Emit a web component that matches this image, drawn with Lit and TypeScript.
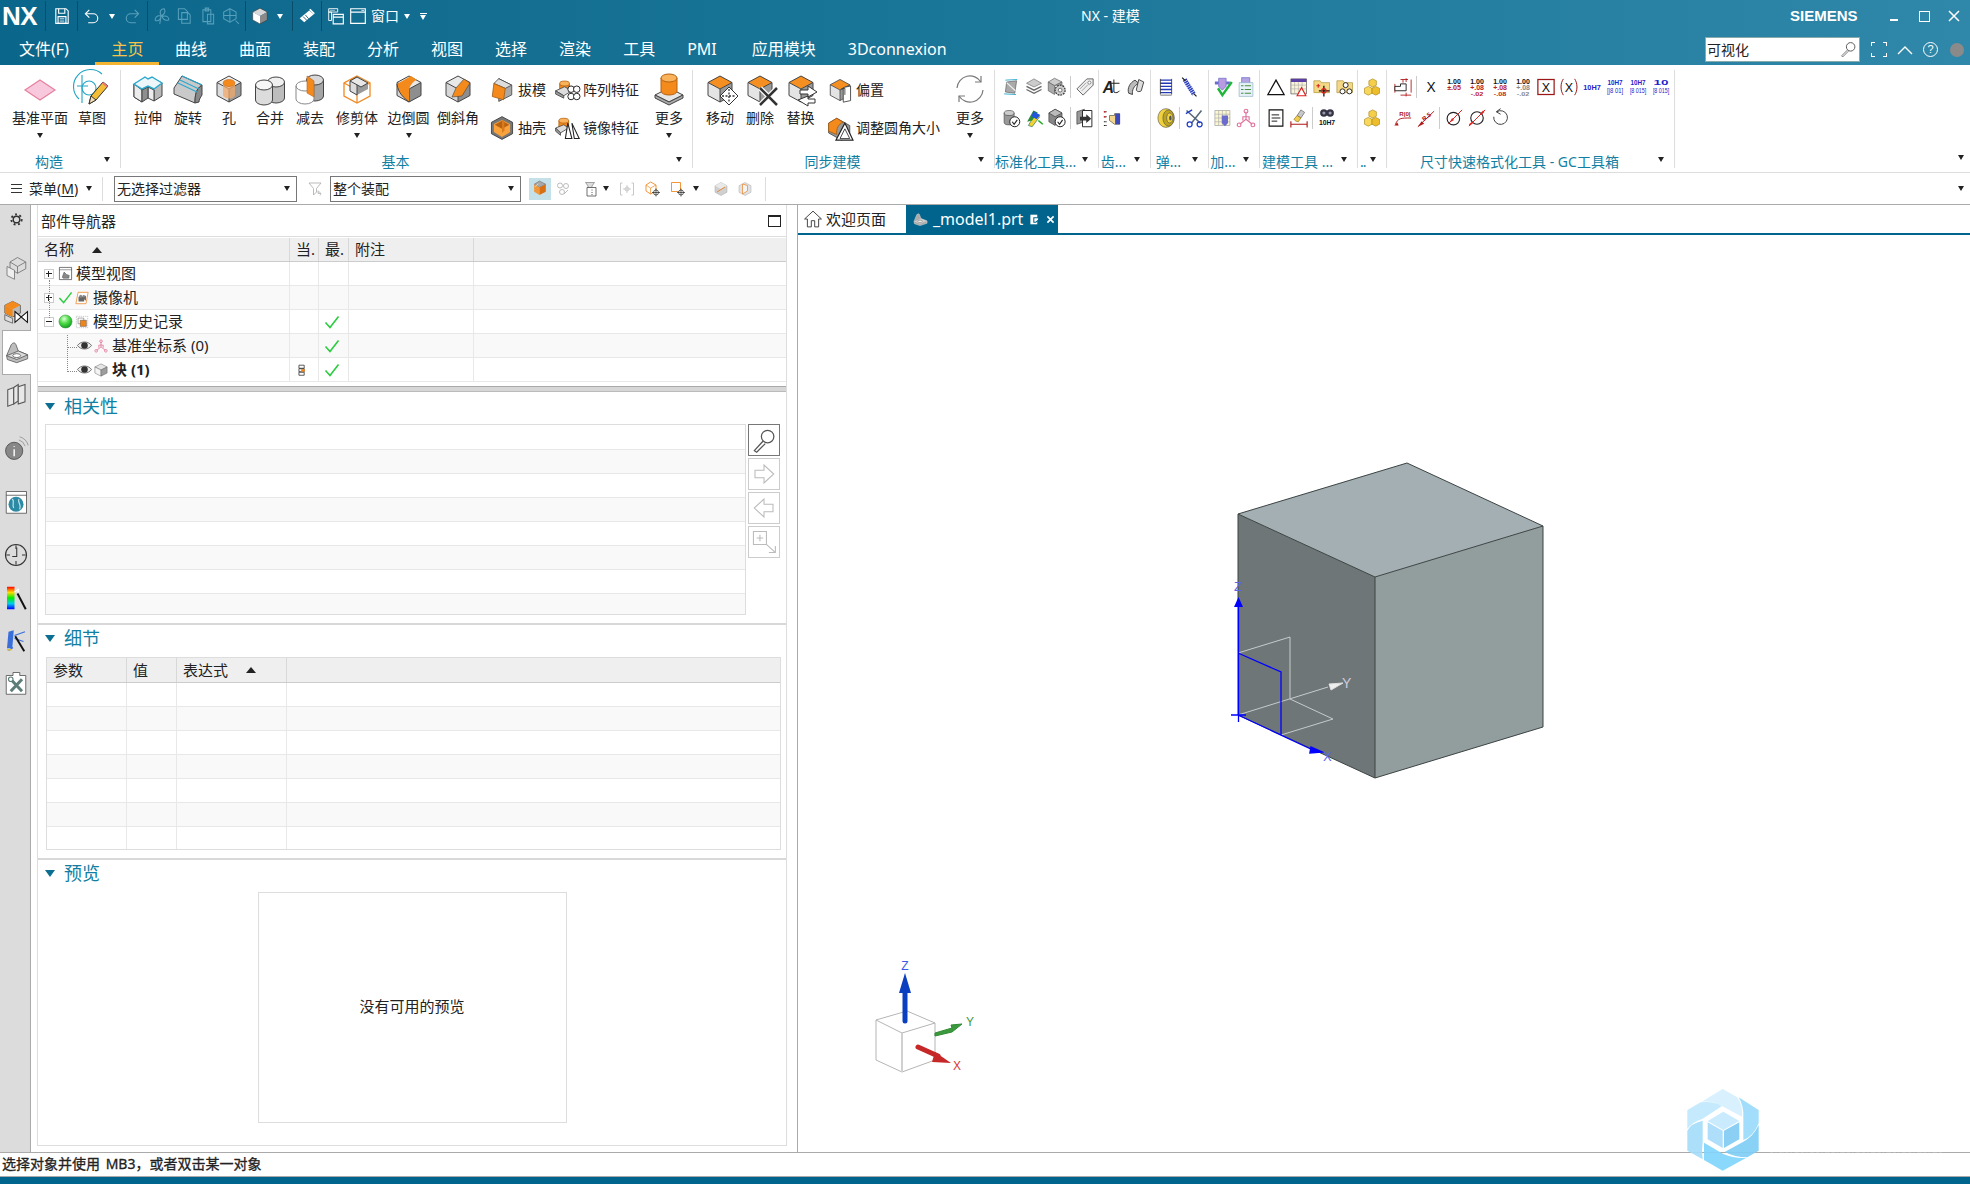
import { LitElement, html, css, svg, nothing } from 'lit';
import type { TemplateResult } from 'lit';
import { customElement } from 'lit/decorators.js';

// shaded cube in a 32 box, most of the ribbon icons start from this
const cube = (top = '#e8e8e8', left = '#d6d6d6', right = '#8e8e8e') => svg`
  <path d="M16 3 28 9.5 16 16 4 9.5Z" fill=${top}/>
  <path d="M4 9.5 16 16V29L4 22.5Z" fill=${left}/>
  <path d="M16 16 28 9.5V22.5L16 29Z" fill=${right}/>
  <path d="M16 3 28 9.5V22.5L16 29 4 22.5V9.5ZM4 9.5 16 16 28 9.5M16 16V29" fill="none" stroke="#444" stroke-width="1" stroke-linejoin="round"/>`;
const orangeCube = cube('#f58f22', '#e4e4e4', '#9a9a9a');

const cyl = (x: number, y: number, rx: number, ry: number, h: number, body: string, top: string, line = '#444') => svg`
  <path d="M${x - rx} ${y}v${h}a${rx} ${ry} 0 0 0 ${rx * 2} 0v${-h}" fill=${body} stroke=${line}/>
  <ellipse cx=${x} cy=${y} rx=${rx} ry=${ry} fill=${top} stroke=${line}/>`;

const plate = svg`<path d="M16 15 30 22 16 29 2 22Z" fill="#e6e6e6" stroke="#444"/><path d="M2 22v3l14 7 14-7v-3L16 29Z" fill="#aaa" stroke="#444"/>`;
const dimText = (a: string, b: string, c: string, ca = '#111', cb = '#b22') => svg`
  <text x="16" y="11" text-anchor="middle" font-size="12" font-weight="700" fill=${ca} textLength="22" lengthAdjust="spacingAndGlyphs">${a}</text>
  <text x="16" y="21" text-anchor="middle" font-size="11" font-weight="700" fill=${cb} textLength="22" lengthAdjust="spacingAndGlyphs">${b}</text>
  ${c ? svg`<text x="16" y="30" text-anchor="middle" font-size="10" font-weight="700" fill=${cb} textLength="20" lengthAdjust="spacingAndGlyphs">${c}</text>` : nothing}`;
const fitText = (a: string, b: string) => svg`
  <text x="16" y="13" text-anchor="middle" font-size="13" font-weight="700" fill="#2222cc" textLength="24" lengthAdjust="spacingAndGlyphs">${a}</text>
  <text x="16" y="26" text-anchor="middle" font-size="11" fill="#2222cc" textLength="26" lengthAdjust="spacingAndGlyphs">${b}</text>`;
const goldCubes = svg`
  <path d="M11 6 17 3 23 6V13L17 16 11 13Z" fill="#f5cf4a" stroke="#a88316"/>
  <path d="M4 18 10 15 16 18V26L10 29 4 26Z" fill="#f7d85c" stroke="#a88316"/>
  <path d="M16 18 22 15 28 18V26L22 29 16 26Z" fill="#eebd2b" stroke="#a88316"/>`;

const I: Record<string, TemplateResult> = {
  datum: svg`<path d="M16 7 31 17 16 27 1 17Z" fill="#f8c8dc" stroke="#e5809f" stroke-width="1.2"/>`,
  sketch: svg`<g fill="none" stroke="#22a3c4" stroke-width="1.1"><path d="M1 13H12M6 2V30"/><path d="M3 26A13 13 0 0 1 26 1"/><circle cx="13" cy="15" r="7"/></g>
    <path d="M13 31 15 23 27 9 32 13 20 27Z" fill="#f3bd35" stroke="#333"/><path d="M13 31 15 23 20 27Z" fill="#f4dfb5" stroke="#333"/><path d="M26 10.5 31 14.5 32 13 27 9Z" fill="#e77"/>`,
  extrude: svg`<path d="M2 11 13 5 17 7 21 5 30 10V23L22 28V17L16 14 10 17V29L2 24Z" fill="#b9b9b9" stroke="#444"/><path d="M2 11 10 17V29L2 24ZM16 14 22 17V28L16 25Z" fill="#ececec" stroke="#444"/><path d="M10 17 16 14V25L10 29Z" fill="#8f8f8f" stroke="#444"/><path d="M2 11 13 4 16 6 20 4 30 10 22 16 16 13 10 16Z" fill="#eef6fa" stroke="#2aa9cf" stroke-width="1.4"/>`,
  revolve: svg`<path d="M2 15 10 3 30 12C24 16 23 22 23 30L2 21Z" fill="#c9c9c9" stroke="#444"/><path d="M23 30C23 22 24 16 30 12V22C28 25 27 27 27 29Z" fill="#888" stroke="#444"/><path d="M10 3 30 12M8 7 27 16M6 10 25 19" stroke="#2aa9cf" stroke-width="1.2" fill="none"/>`,
  hole: svg`${cube('#ededed', '#dcdcdc', '#9a9a9a')}<path d="M10 10v12a6 3.5 0 0 0 12 0V10" fill="#f2a868" opacity=".75"/><ellipse cx="16" cy="10" rx="6" ry="3.5" fill="#f58a1c" stroke="#c96a10" stroke-width=".6"/>`,
  unite: svg`${cyl(22, 9, 8.5, 5, 16, '#bdbdbd', '#f0f0f0')}${cyl(10, 12, 8.5, 5, 15, '#dcdcdc', '#f6f6f6')}`,
  subtract: svg`${cyl(21, 7, 8.5, 5, 16, '#a5a5a5', '#d8d8d8')}<ellipse cx="11" cy="13" rx="9" ry="5" fill="#fff"/><path d="M2 13v13a9 5 0 0 0 18 0V13" fill="#fff" stroke="#888"/><ellipse cx="11" cy="13" rx="9" ry="5" fill="none" stroke="#888"/><path d="M13 3 20 8V24L13 20Z" fill="#f58a1c" stroke="#b96010" stroke-width=".6"/>`,
  trim: svg`<path d="M16 3 29 10V23L16 30 3 23V10Z" fill="none" stroke="#f08a24" stroke-width="1.3"/><path d="M3 10 16 17 29 10M16 17V30" fill="none" stroke="#f08a24" stroke-width="1.3"/><path d="M16 4 27 10 27 16 16 22Z" fill="#9a9a9a"/><path d="M9 8 16 4 16 22 9 18Z" fill="#dcdcdc" stroke="#444"/><path d="M9 8 16 4 27 10 20 14Z" fill="#e8e8e8" stroke="#444"/>`,
  blend: svg`${cube()}<path d="M4 11 18 3 24 7C20 8 16 13 16 19V29C11 25 5 20 4 11Z" fill="#f58a1c"/><path d="M4 11C5 20 11 25 16 29" fill="none" stroke="#444"/>`,
  chamfer: svg`${cube()}<path d="M14 15 22 6 28 10 20 23 10 24Z" fill="#f58a1c" stroke="#444" stroke-width=".6"/>`,
  draft: svg`<path d="M12 2 28 10V22L12 30Z" fill="#a9a9a9" stroke="#444"/><path d="M12 2 28 10 20 14 6 8Z" fill="#ddd" stroke="#444"/><path d="M6 8 20 14 18 28 4 24Z" fill="#f58a1c" stroke="#a55d12"/>`,
  shell: svg`<path d="M16 2 29 9V23L16 30 3 23V9Z" fill="#777" stroke="#333"/><path d="M16 6 26 11V21L16 27 6 21V11Z" fill="#f9a13a"/><path d="M16 7 25 12 16 17 7 12Z" fill="#b86110"/><path d="M16 6 19 8 19 19 16 22Z" fill="#d97a1c"/>`,
  pattern: svg`${cyl(13, 8, 6, 3, 8, '#f58a1c', '#fab25b', '#b56210')}<path d="M2 17 13 12 22 17 12 23Z" fill="#ddd" stroke="#444"/><path d="M2 17v4l10 5V23Z" fill="#999" stroke="#444"/><g fill="#fff" stroke="#222" stroke-width="1.2"><circle cx="21" cy="15" r="4"/><circle cx="28" cy="15" r="4"/><circle cx="21" cy="24" r="4"/><circle cx="28" cy="24" r="4"/></g>`,
  mirror: svg`${cyl(12, 7, 6, 3, 8, '#f58a1c', '#fab25b', '#b56210')}<path d="M2 16 12 12 18 16 8 22Z" fill="#ddd" stroke="#444"/><path d="M2 16v4l6 5V22Z" fill="#999" stroke="#444"/><path d="M17 10 14 29H22ZM22 10 25 29H31Z" fill="#fff" stroke="#222" stroke-width="1.3"/>`,
  more1: svg`${plate}${cyl(16, 5, 8, 4, 13, '#f58a1c', '#fab25b', '#b56210')}`,
  move: svg`${orangeCube}<path d="M25 14 34 23 25 32 16 23Z" fill="#fff" stroke="#333"/><path d="M25 16v14M18 23h14" stroke="#333" stroke-dasharray="2 1.5" stroke-width="1.3"/>`,
  del: svg`${orangeCube}<path d="M16 15 33 32M33 15 16 32" stroke="#fff" stroke-width="5"/><path d="M16 15 33 32M33 15 16 32" stroke="#333" stroke-width="2.5"/>`,
  swap: svg`${orangeCube}<path d="M23 13 32 19 23 24V21H15V17H23ZM23 23 13 27 23 33V30H30V26H23Z" fill="#fff" stroke="#333"/>`,
  offset: svg`${orangeCube}<path d="M20 13 29 11V29L20 31Z" fill="#fff" stroke="#333"/><path d="M17 15 22 14V22" fill="none" stroke="#333"/>`,
  resize: svg`<path d="M2 10 12 4 28 13V25L18 31 2 22Z" fill="#9a9a9a" stroke="#444"/><path d="M2 10 12 4 20 9C14 11 11 17 12 24L2 20Z" fill="#f58a1c" stroke="#a55d12"/><path d="M22 10 11 31H32Z" fill="#fff" stroke="#222" stroke-width="1.4"/><path d="M22 17 16 29H28Z" fill="#fff" stroke="#222"/>`,
  sync: svg`<g fill="none" stroke="#7a7a7a" stroke-width="1.2"><path d="M3 15A13 13 0 0 1 27 9M29 17A13 13 0 0 1 5 23"/><path d="M27 3V9H21M5 29V23H11"/></g>`,

  sheet: svg`<path d="M9 8 25 6 22 26 7 24Z" fill="#aaa" stroke="#555"/><path d="M7 5 26 4M5 27 24 28" stroke="#23a5c9" stroke-width="1.4" fill="none"/><path d="M9 9 23 22" stroke="#eee" stroke-width="2"/>`,
  layers: svg`<path d="M16 3 28 10 16 16 4 10Z" fill="#ccc" stroke="#666"/><path d="M4 15 16 21 28 15M4 20 16 26 28 20" fill="none" stroke="#666" stroke-width="2.2"/>`,
  gearCube: svg`<path d="M12 2 24 8 12 14 2 8Z" fill="#ccc" stroke="#555"/><path d="M2 8V22L12 28V14ZM12 14 24 8V14" fill="#aaa" stroke="#555"/><circle cx="21" cy="21" r="8" fill="#ccc" stroke="#333" stroke-width="2" stroke-dasharray="3 1.5"/><circle cx="21" cy="21" r="3" fill="#fff" stroke="#333"/>`,
  tag: svg`<path d="M29 3 19 3 3 19 13 29 29 13Z" fill="#eee" stroke="#555" stroke-width="1.4"/><circle cx="23" cy="9" r="2.5" fill="#fff" stroke="#555"/><path d="M8 19 18 9M11 22 21 12" stroke="#999" stroke-width="1.4"/>`,
  checkGray: svg`${cyl(13, 8, 8, 4, 15, '#999', '#ccc')}<circle cx="22" cy="22" r="8" fill="#fff" stroke="#222" stroke-width="1.6"/><path d="M18 22l3 4 5-7" stroke="#222" stroke-width="1.8" fill="none"/>`,
  tool: svg`<path d="M7 28 18 9 25 14 13 30Z" fill="#f3d233" stroke="#166"/><path d="M5 22 15 4 22 7 13 20Z" fill="#2d8a3a"/><path d="M15 5 26 11 20 18 12 13Z" fill="#2255dd"/><path d="M23 20 30 26" stroke="#2a2" stroke-width="2.5"/>`,
  cubeCheck: svg`<path d="M13 2 24 8V16L13 28 3 22V8Z" fill="#888" stroke="#333"/><path d="M13 2 24 8 13 14 3 8Z" fill="#bbb" stroke="#333"/><circle cx="21" cy="22" r="8" fill="#fff" stroke="#222" stroke-width="1.6"/><path d="M17 22l3 4 5-7" stroke="#222" stroke-width="1.8" fill="none"/>`,
  docArrow: svg`<path d="M3 6 15 2 15 22 3 26Z" fill="#999" stroke="#333"/><path d="M12 4H27V30H12Z" fill="#fff" stroke="#222" stroke-width="1.5"/><path d="M8 14H18V10L26 17 18 24V20H8Z" fill="#333"/>`,
  at: svg`<text x="1" y="25" font-size="25" font-style="italic" font-weight="700" fill="#222">A</text><path d="M19 4V24M14 10H28M19 24C22 26 26 25 28 22" stroke="#222" stroke-width="1.6" fill="none"/>`,
  pipe: svg`<path d="M6 26C3 18 8 9 16 5L22 10C14 14 11 21 12 28Z" fill="#bbb" stroke="#333" stroke-width="1.4"/><path d="M22 4 30 8 26 22C24 24 20 24 18 21Z" fill="#ddd" stroke="#333" stroke-width="1.4"/>`,
  hand: svg`<path d="M3 6H8M3 14H8M3 22H8M3 28H8" stroke="#222" stroke-width="1.6" stroke-dasharray="3 1"/><path d="M3 6H6M3 14H6" stroke="#d22" stroke-width="2"/><path d="M12 12H20V9H28V26H20L12 20Z" fill="#f3d68a" stroke="#444"/><path d="M21 9H29V26H21Z" fill="#3d49b8"/>`,
  coil: svg`<path d="M8 3H25V29H8Z" fill="#fff"/><g stroke="#2238b5" stroke-width="2.2"><path d="M7 5H25M7 10H25M7 15H25M7 20H25M7 25H25"/></g><path d="M7 3V28M25 3V28" stroke="#222" stroke-width="1.2"/><path d="M7 29H25" stroke="#222"/>`,
  spring: svg`<path d="M9 4 24 28" stroke="#2b3fc0" stroke-width="7" stroke-dasharray="2.5 1"/><path d="M5 1 10 6M24 27 28 31" stroke="#222" stroke-width="2"/>`,
  bearing: svg`<ellipse cx="16" cy="16" rx="13" ry="15" fill="#f1d13c" stroke="#555"/><ellipse cx="20" cy="16" rx="9" ry="13" fill="#bda21e" stroke="#555"/><ellipse cx="22" cy="16" rx="5" ry="8" fill="#eed23e" stroke="#555"/><ellipse cx="23" cy="16" rx="2" ry="4" fill="#555"/>`,
  scissors: svg`<path d="M4 4 26 24M28 4 12 24" stroke="#567" stroke-width="2.4"/><circle cx="9" cy="26" r="4" fill="none" stroke="#1d3dc7" stroke-width="2"/><circle cx="25" cy="26" r="4" fill="none" stroke="#1d3dc7" stroke-width="2"/><path d="M3 9 13 3" stroke="#1d3dc7" stroke-width="2"/>`,
  blueCheck: svg`<path d="M9 2H21V15L15 21 9 15Z" fill="#b99be2" stroke="#5a62c4"/><path d="M3 7H9V12H3ZM21 7H27V12H21Z" fill="#6c6cd0"/><path d="M8 18 15 29 30 8" fill="none" stroke="#21b63a" stroke-width="4"/>`,
  blueList: svg`<path d="M9 1H22V14H9Z" fill="#b2a3e2" stroke="#5a62c4"/><path d="M5 9H27V31H5Z" fill="#e7f2fb" stroke="#8ab"/><path d="M8 14H12M14 14H24M8 20H12M14 20H24M8 26H12M14 26H24" stroke="#4a8d3a" stroke-width="1.8"/>`,
  gridBlue: svg`<path d="M3 4H27V28H3Z" fill="#fbf7d0" stroke="#999"/><path d="M3 10H27M3 16H27M3 22H27M9 4V28M15 4V28M21 4V28" stroke="#aaa"/><path d="M14 12H24V24L19 29 14 24Z" fill="#6c6cd0"/>`,
  csys: svg`<g fill="none" stroke="#e0709a" stroke-width="1.8"><path d="M16 6V18L6 26M16 18 26 26"/><circle cx="16" cy="5" r="3"/><circle cx="5" cy="27" r="3"/><circle cx="27" cy="27" r="3"/><path d="M11 20V14H21V20"/></g>`,
  triangle: svg`<path d="M16 5 29 28H3Z" fill="#fff" stroke="#111" stroke-width="2"/>`,
  tableRed: svg`<path d="M3 3H28V27H3Z" fill="#fbf3d8" stroke="#444"/><path d="M3 3H28V8H3Z" fill="#5b3fa5"/><path d="M3 13H28M3 19H28M9 8V27M15 8V27M21 8V27" stroke="#aaa"/><path d="M20 17 27 30H13Z" fill="#fff" stroke="#d22" stroke-width="1.8"/>`,
  folderCross: svg`<path d="M3 6H13L15 9H28V25H3Z" fill="#f5d886" stroke="#a98b2e"/><path d="M19 14V31M11 22H28" stroke="#111" stroke-width="2"/><circle cx="19" cy="22" r="3.5" fill="none" stroke="#d22" stroke-width="2"/><path d="M7 14H13M10 11V17" stroke="#d22" stroke-width="1.8"/>`,
  folderCircles: svg`<path d="M3 6H13L15 9H28V25H3Z" fill="#f5d886" stroke="#a98b2e"/><g fill="#fff" stroke="#222" stroke-width="1.5"><circle cx="17" cy="13" r="4"/><circle cx="12" cy="23" r="4"/><circle cx="23" cy="23" r="4"/></g>`,
  docLines: svg`<path d="M5 3H27V29H5Z" fill="#fff" stroke="#111" stroke-width="1.8"/><path d="M9 11H21M9 16H23M9 21H18" stroke="#111" stroke-width="1.5"/>`,
  brushDim: svg`<path d="M19 3 25 7 19 16 13 12Z" fill="#c8c8c8" stroke="#555"/><path d="M13 12 19 16 15 22C12 22 9 20 8 18Z" fill="#f2cc52" stroke="#8a6a10"/><path d="M3 21V31M29 21V31M3 26H29" stroke="#b01818" stroke-width="1.8"/>`,
  bino: svg`<circle cx="11" cy="8" r="6" fill="#334"/><circle cx="21" cy="8" r="6" fill="#334"/><circle cx="11" cy="8" r="2.5" fill="#99a"/><circle cx="21" cy="8" r="2.5" fill="#99a"/><text x="16" y="27" text-anchor="middle" font-size="12" font-weight="700" fill="#111" textLength="26" lengthAdjust="spacingAndGlyphs">10H7</text>`,
  gold: goldCubes,
  dimRed: svg`<path d="M3 11V25M29 4V25M16 4V9M3 18H16M21 2V8M12 4H24M12 29H29M21 25V31" stroke="#b01818" stroke-width="1.4" fill="none"/><path d="M12 11H21V22H3V15H12Z" fill="#fff" stroke="#222" stroke-width="1.5"/>`,
  xMark: svg`<text x="16" y="24" text-anchor="middle" font-size="22" fill="#111">X</text>`,
  d1: dimText('1.00', '±.05', ''),
  d2: dimText('1.00', '+.08', '-.02'),
  d3: dimText('1.00', '+.08', '-.08', '#111', '#b22'),
  d4: dimText('1.00', '+.08', '-.02', '#111', '#888'),
  boxX: svg`<rect x="3" y="4" width="26" height="24" fill="#fff" stroke="#9c1818" stroke-width="2"/><text x="16" y="24" text-anchor="middle" font-size="20" fill="#111">X</text>`,
  parenX: svg`<path d="M7 3C2 10 2 22 7 29M25 3C30 10 30 22 25 29" fill="none" stroke="#9c1818" stroke-width="1.6"/><text x="16" y="24" text-anchor="middle" font-size="20" fill="#111">X</text>`,
  h7: svg`<text x="16" y="21" text-anchor="middle" font-size="13" font-weight="700" fill="#2222cc" textLength="28" lengthAdjust="spacingAndGlyphs">10H7</text>`,
  h8: fitText('10H7', '[|8 01]'),
  h9: fitText('10H7', '[8 015]'),
  h10: fitText('10', '[8 015]'),
  radLead: svg`<path d="M4 26C8 16 12 16 29 16" fill="none" stroke="#b01818" stroke-width="1.5"/><path d="M2 28 7 23 9 28Z" fill="#b01818"/><text x="19" y="13" text-anchor="middle" font-size="10" font-weight="700" fill="#b01818" textLength="18" lengthAdjust="spacingAndGlyphs">R|0|</text>`,
  radDiag: svg`<path d="M3 30 29 5" stroke="#b01818" stroke-width="1.5"/><path d="M3 30 9 21 13 25Z" fill="#b01818"/><text x="18" y="17" text-anchor="middle" font-size="10" font-weight="700" fill="#b01818" transform="rotate(-40 18 15)">R.5</text>`,
  dia1: svg`<circle cx="15" cy="17" r="10" fill="none" stroke="#222" stroke-width="1.8"/><path d="M7 25 29 3" stroke="#d22" stroke-width="1.6"/><path d="M9 23 16 19 13 16Z" fill="#d22"/>`,
  dia2: svg`<circle cx="16" cy="16" r="10" fill="none" stroke="#222" stroke-width="1.8"/><path d="M3 29 29 3" stroke="#d22" stroke-width="1.6"/><path d="M9 23 4 27M22 10 27 5" stroke="#d22" stroke-width="3"/>`,
  rotateBack: svg`<path d="M11 6A11 11 0 1 1 6 14" fill="none" stroke="#444" stroke-width="1.6"/><path d="M17 1 10 6 17 10" fill="none" stroke="#444" stroke-width="1.6"/>`,

  // quick access, drawn white on the title bar
  save: svg`<path d="M5 3H23L27 7V29H5Z" fill="none" stroke="#fff" stroke-width="2"/><path d="M10 3V11H21V3M9 17H23V29H9Z" fill="none" stroke="#fff" stroke-width="2"/><path d="M12 21H20M12 25H20" stroke="#fff" stroke-width="1.5"/>`,
  undo: svg`<path d="M7 12H20A8 8 0 0 1 20 28H11" fill="none" stroke="#fff" stroke-width="2"/><path d="M13 5 6 12 13 19" fill="none" stroke="#fff" stroke-width="2"/>`,
  redo: svg`<path d="M25 12H12A8 8 0 0 0 12 28H21" fill="none" stroke="#58a0bb" stroke-width="2"/><path d="M19 5 26 12 19 19" fill="none" stroke="#58a0bb" stroke-width="2"/>`,
  fan: svg`<g fill="none" stroke="#58a0bb" stroke-width="1.8"><path d="M15 16C10 8 14 3 20 3 23 8 20 13 15 16ZM16 17C24 14 29 18 28 23 22 25 18 22 16 17ZM14 16C7 14 3 19 4 24 10 26 14 22 14 16ZM14 18 12 30"/></g>`,
  copyDim: svg`<path d="M6 3H17L22 8V22H6ZM12 10H23L27 14V29H12Z" fill="none" stroke="#58a0bb" stroke-width="1.8"/>`,
  pasteDim: svg`<path d="M7 5H21V26H7ZM11 2H17V7H11ZM15 13H26V30H15Z" fill="none" stroke="#58a0bb" stroke-width="1.8"/>`,
  hexDim: svg`<path d="M14 3 25 9V21L14 27 3 21V9Z" fill="none" stroke="#58a0bb" stroke-width="1.8"/><path d="M3 15H25M14 3V27M24 24 30 30" stroke="#58a0bb" stroke-width="1.8"/>`,
  qCube: svg`<path d="M16 2 29 9 16 16 3 9Z" fill="#d8d8d8"/><path d="M3 9 16 16V30L3 23Z" fill="#fff"/><path d="M16 16 29 9V23L16 30Z" fill="#8a8a8a"/><path d="M16 2 29 9V23L16 30 3 23V9Z" fill="none" stroke="#333"/>`,
  qTool: svg`<path d="M3 20 20 6 28 13 11 27Z" fill="#fff"/><path d="M21 4 29 12" stroke="#fff" stroke-width="3"/><path d="M9 17 16 24M13 14 19 21" stroke="#1b5a78" stroke-width="1.6"/>`,
  qWins: svg`<path d="M3 3H19V9H3ZM3 9H8V24H3Z" fill="none" stroke="#fff" stroke-width="1.6"/><path d="M11 13H29V30H11ZM11 18H29" fill="none" stroke="#fff" stroke-width="2"/><path d="M5 6H14" stroke="#fff"/>`,
  qWin: svg`<path d="M3 3H29V29H3ZM3 9H29" fill="none" stroke="#fff" stroke-width="2"/><path d="M22 6H27" stroke="#fff" stroke-width="1.5"/>`,

  // toolbar
  funnel: svg`<path d="M4 4H28L19 15V22L13 28V15Z" fill="none" stroke="#aaa" stroke-width="1.6"/><path d="M22 22C27 21 29 26 26 29M22 19V25H28" fill="none" stroke="#aaa" stroke-width="1.4"/>`,
  tbCube: svg`<path d="M14 2 26 8 14 14 4 8Z" fill="#a8a8a8" stroke="#666"/><path d="M4 8 14 14V28L4 22Z" fill="#f0973a"/><path d="M14 14 26 8V22L14 28Z" fill="#d96f15"/><path d="M6 13 12 7" stroke="#fff"/>`,
  tbChain: svg`<g fill="none" stroke="#bbb" stroke-width="2"><circle cx="10" cy="9" r="5"/><circle cx="22" cy="10" r="5"/><circle cx="14" cy="22" r="5"/><path d="M18 26 26 18"/></g>`,
  tbFilter: svg`<path d="M5 3H23L18 10V15H10V10Z" fill="#ddd" stroke="#555"/><path d="M8 13H26V30H8Z" fill="#fff" stroke="#333" stroke-width="1.4"/><path d="M18 17V19M18 22V24M18 26V28" stroke="#333" stroke-width="1.6"/>`,
  tbBrack: svg`<path d="M7 4H3V28H7M25 4H29V28H25" fill="none" stroke="#bbb" stroke-width="1.6"/><path d="M16 8V24M8 16H24" stroke="#bbb" stroke-width="1.4"/><circle cx="16" cy="16" r="4" fill="none" stroke="#bbb" stroke-width="1.4"/>`,
  tbOcross: svg`<path d="M11 2 22 8V20L11 26 2 20V8Z" fill="#fff" stroke="#f08a24" stroke-width="1.8"/><path d="M2 8 11 14 22 8M11 14V26" fill="none" stroke="#f08a24" stroke-width="1.4"/><circle cx="22" cy="23" r="5" fill="#fff" stroke="#222" stroke-width="1.4"/><path d="M22 15V31M14 23H30" stroke="#222" stroke-width="1.4"/>`,
  tbSquare: svg`<path d="M3 3H21V21H3Z" fill="none" stroke="#f08a24" stroke-width="1.8"/><circle cx="22" cy="23" r="5" fill="#fff" stroke="#222" stroke-width="1.4"/><path d="M22 15V31M14 23H30" stroke="#222" stroke-width="1.4"/>`,
  tbCut: svg`<path d="M16 3 28 9.5V22.5L16 29 4 22.5V9.5Z" fill="#d0d0d0" stroke="#aaa"/><path d="M16 3 28 9.5 16 16 4 9.5Z" fill="#e9e9e9"/><path d="M8 22 24 12" stroke="#e88a34" stroke-width="2"/>`,
  tbCut2: svg`<path d="M16 3 28 9.5V22.5L16 29 4 22.5V9.5Z" fill="#e2e2e2" stroke="#aaa"/><path d="M11 6V26L21 20V9Z" fill="#f4f4f4" stroke="#e88a34" stroke-width="1.5"/>`,

  // resource bar on the left
  gear: svg`<circle cx="16" cy="16" r="7" fill="none" stroke="#333" stroke-width="3"/><circle cx="16" cy="16" r="11" fill="none" stroke="#333" stroke-width="4" stroke-dasharray="4 5.5"/>`,
  railAsm: svg`<path d="M18 2 29 8V17L18 23 8 17V8Z" fill="#dcdcdc" stroke="#666"/><path d="M8 8 18 14 29 8M18 14V23" fill="none" stroke="#666"/><path d="M4 14 14 19V31L4 26Z" fill="#eee" stroke="#666"/>`,
  railCons: svg`<path d="M11 3 21 8V18L11 23 1 18V8Z" fill="#bbb" stroke="#555"/><path d="M11 3 21 8 11 13 1 8Z" fill="#f58a1c"/><path d="M1 8 11 13V23L1 18Z" fill="#f0871a"/><path d="M1 20 11 25V31L1 27Z" fill="#ddd" stroke="#555"/><path d="M14 16 30 30V16L14 30Z" fill="#fff" stroke="#111" stroke-width="1.3"/>`,
  railPart: svg`<path d="M2 20 8 6C10 3 13 3 14 6L17 14 29 19V24L15 29 3 25Z" fill="#bdbdbd" stroke="#555"/><path d="M2 20 15 25 29 19 17 14 10 17Z" fill="#dcdcdc" stroke="#555"/><ellipse cx="15" cy="20" rx="5" ry="2.5" fill="#fff" stroke="#555"/>`,
  railBooks: svg`<g fill="#e8e8e8" stroke="#555" stroke-width="1.4"><path d="M5 9 13 6V28L5 31Z"/><path d="M13 6 19 2V24L13 28Z"/><path d="M19 5 28 2V25L19 28Z"/></g>`,
  railInfo: svg`<circle cx="13" cy="19" r="11" fill="#888" stroke="#444"/><path d="M13 17V26M13 13V14" stroke="#fff" stroke-width="1.8"/><path d="M19 5A12 12 0 0 1 27 13M20 1A16 16 0 0 1 31 12" fill="none" stroke="#999" stroke-width="1.2"/>`,
  railWeb: svg`<path d="M3 2H30V31H3Z" fill="#fff" stroke="#444"/><path d="M3 7H30" stroke="#444"/><circle cx="16" cy="19" r="10" fill="#2d8aa5"/><path d="M11 12C15 15 10 19 13 24M20 12C17 17 24 18 21 26" fill="none" stroke="#bfe3ea" stroke-width="1.6"/>`,
  railClock: svg`<circle cx="16" cy="16" r="14" fill="none" stroke="#333" stroke-width="1.5"/><path d="M16 3V8M16 24V29M3 16H8M24 16H29" stroke="#333" stroke-width="1.4"/><path d="M17 6V18H11" fill="none" stroke="#333" stroke-width="1.4"/>`,
  railSpec: svg`<defs><linearGradient id="rb" x1="0" y1="0" x2="0" y2="1"><stop offset="0" stop-color="#f00"/><stop offset=".25" stop-color="#fd0"/><stop offset=".5" stop-color="#0e0"/><stop offset=".75" stop-color="#0ce"/><stop offset="1" stop-color="#00f"/></linearGradient></defs><path d="M4 1H14V31H4Z" fill="url(#rb)"/><path d="M18 10 29 31" stroke="#111" stroke-width="2.6"/><path d="M17 5 20 8M14 8 20 4" stroke="#fff" stroke-width="1.5"/>`,
  railWand: svg`<path d="M6 5 13 3 11 27H4Z" fill="#3a6ed8"/><path d="M14 10 28 5M14 14 26 18M6 30 12 26" stroke="#3a6ed8" stroke-width="1.6"/><path d="M15 11 27 31" stroke="#111" stroke-width="2.6"/><path d="M4 29H10" stroke="#dcc33a" stroke-width="2"/>`,
  railTool: svg`<path d="M3 6H12V2H21V6H29V31H3Z" fill="#fff" stroke="#444"/><path d="M9 11 24 27M24 11 9 27" stroke="#5d7d78" stroke-width="4"/><circle cx="9" cy="11" r="3" fill="#fff" stroke="#5d7d78" stroke-width="1.5"/>`,

  // navigator tree
  viewWin: svg`<path d="M3 3H29V29H3Z" fill="#fff" stroke="#333" stroke-width="1.4"/><path d="M3 8H29" stroke="#333"/><path d="M9 24 13 13 18 18 24 20 23 26H11Z" fill="#888" stroke="#444"/>`,
  cam: svg`<path d="M7 3 30 3 25 29H2Z" fill="#fff" stroke="#ee8a2d" stroke-width="1.8"/><path d="M8 13H21L25 10V22L21 19V24H8Z" fill="#666"/><circle cx="13" cy="12" r="3.5" fill="#888"/><circle cx="20" cy="12" r="3" fill="#888"/>`,
  ball: svg`<defs><radialGradient id="gb" cx=".4" cy=".3" r=".7"><stop offset="0" stop-color="#dfffd8"/><stop offset=".5" stop-color="#4fdc4a"/><stop offset="1" stop-color="#14a020"/></radialGradient></defs><circle cx="16" cy="16" r="14" fill="url(#gb)" stroke="#2d8a3a"/>`,
  hist: svg`<path d="M3 3H29V29H3Z" fill="#fff" stroke="#888" stroke-dasharray="3 2"/><path d="M7 7H20V20H7Z" fill="#fff" stroke="#444"/><path d="M12 12H26V26H12Z" fill="#f0851a" stroke="#444"/>`,
  eye: svg`<path d="M1 16C8 6 24 6 31 16 24 26 8 26 1 16Z" fill="#eee" stroke="#444" stroke-width="1.5"/><circle cx="16" cy="16" r="7" fill="#333"/>`,
  blockIco: svg`<path d="M16 2 30 9 16 16 2 9Z" fill="#e6e6e6" stroke="#555"/><path d="M2 9 16 16V30L2 23Z" fill="#f4f4f4" stroke="#555"/><path d="M16 16 30 9V23L16 30Z" fill="#9e9e9e" stroke="#555"/>`,
  treeDot: svg`<path d="M9 5H21V12H9ZM9 13H21V20H9ZM9 21H21V28H9Z" fill="#fff" stroke="#333" stroke-width="1.8"/><path d="M14 14H22V20H14Z" fill="#f0851a"/>`,
  check: svg`<path d="M3 17 12 27 29 5" fill="none" stroke="#2bcc3f" stroke-width="3.2"/>`,

  // side buttons of the dependency box
  mag: svg`<circle cx="20" cy="11" r="8" fill="none" stroke="#555" stroke-width="1.6"/><path d="M14 17 3 29 6 31 17 20" fill="none" stroke="#555" stroke-width="1.6"/>`,
  arrR: svg`<path d="M4 11H16V4L29 16 16 28V21H4Z" fill="none" stroke="#bbb" stroke-width="1.4"/>`,
  arrL: svg`<path d="M28 11H16V4L3 16 16 28V21H28Z" fill="none" stroke="#bbb" stroke-width="1.4"/>`,
  zoomBox: svg`<path d="M3 3H19V19H3ZM11 7V15M7 11H15M19 19 30 29M30 21V29H22" fill="none" stroke="#bbb" stroke-width="1.3"/>`,

  home: svg`<path d="M16 2 31 16H26V30H19V19H13V30H6V16H1Z" fill="none" stroke="#333" stroke-width="1.6"/>`,
  part: svg`<path d="M2 20 8 6C10 3 13 3 14 6L17 14 30 19V24L15 29 3 25Z" fill="#aaa" stroke="#ddd"/><path d="M2 20 15 25 30 19 17 14 10 17Z" fill="#ccc"/><ellipse cx="15" cy="20" rx="5" ry="2.5" fill="#eee" stroke="#666"/>`,
  docSmall: svg`<path d="M4 2H24V30H4Z" fill="#fff"/><path d="M14 11H28V17L20 24H14Z" fill="#fff" stroke="#00648c" stroke-width="3"/>`,
  close: svg`<path d="M5 5 27 27M27 5 5 27" stroke="#fff" stroke-width="6"/>`,
  magSmall: svg`<circle cx="20" cy="11" r="8" fill="none" stroke="#555" stroke-width="1.8"/><path d="M14 17 3 28 5 30 16 19" fill="#fff" stroke="#555" stroke-width="1.5"/>`,
};

const ic = (name: string, size = 20) => html`<svg class="ic" viewBox="0 0 32 32" width=${size} height=${size}>${I[name]}</svg>`;
const down = () => html`<span class="tri"></span>`;

const big = (icon: string, label: string, w: number, drop = false) => html`
  <div class="big" style="width:${w}px">
    <div class="big-ico">${ic(icon, 32)}</div>
    <div class="big-lbl">${label}</div>
    ${drop ? down() : nothing}
  </div>`;
const small = (icon: string, label: string) => html`
  <div class="small">${ic(icon, 26)}<span>${label}</span></div>`;
// one row of the compact icon groups, '|' is a separator
const iconRow = (names: string[]) => html`
  <div class="irow">
    ${names.map((n) => (n === '|' ? html`<i class="isep"></i>` : html`<span class="cell">${ic(n, 20)}</span>`))}
  </div>`;

const group = (label: string, w: number, pad: number, body: unknown, tight = false) => html`
  <section class="group" style="width:${w}px">
    <div class="gbody" style="padding-left:${pad}px">${body}</div>
    <div class="gfoot">
      <span class="glabel ${tight ? 'tight' : ''}">${label}</span>
      <span class="gdrop">${down()}</span>
    </div>
  </section>`;

const TABS = ['曲线', '曲面', '装配', '分析', '视图', '选择', '渲染', '工具', 'PMI', '应用模块', '3Dconnexion'];
const RAIL = [
  ['gear', 0, 15], ['railAsm', 21, 24], ['railCons', 15, 25], ['railPart', 5, 25, true], ['railBooks', 6, 24], ['railInfo', 25, 25],
  ['railWeb', 26, 24], ['railClock', 25, 24], ['railSpec', 15, 24], ['railWand', 14, 24], ['railTool', 15, 24],
] as [string, number, number, boolean?][];

@customElement('app-root')
export class AppRoot extends LitElement {
  static styles = css`
    :host {
      display: block;
      width: 1970px;
      height: 1184px;
      position: relative;
      overflow: hidden;
      background: #fff;
      color: #222;
      font: 14px/20px "Noto Sans", "Noto Sans CJK SC", sans-serif;
    }
    * { box-sizing: border-box; }
    svg text { font-family: "Liberation Sans", sans-serif; }
    .ic { display: block; flex: none; overflow: visible; }
    .tri {
      display: block;
      flex: none;
      width: 0;
      height: 0;
      border: 3.5px solid transparent;
      border-top: 5px solid #222;
      border-bottom: 0;
    }
    .shell { display: flex; flex-direction: column; height: 1184px; }

    .header { height: 65px; flex: none; color: #fff; background: linear-gradient(90deg, #0b668b, #1b7799 50%, #2f87a9); }
    .titlebar { height: 32px; display: flex; align-items: center; }
    .brand { margin-left: 2px; width: 38px; font: 700 26px/32px "Liberation Sans", sans-serif; letter-spacing: -0.5px; }
    .qsep { width: 1px; height: 30px; background: #0a4c69; flex: none; }
    .qtri .tri, .tabs-right .tri { border-top-color: #fff; }
    .qtext { margin-left: 4px; width: 28px; font-size: 14px; }
    .lined { display: flex; flex-direction: column; gap: 1px; }
    .lined::before { content: ""; width: 7px; height: 1px; background: #fff; }
    .wintitle { margin-left: 654px; font-size: 14px; }
    .winright { margin-left: auto; display: flex; align-items: center; padding-right: 10px; }
    .siemens { font: 700 15px/20px "Liberation Sans", sans-serif; width: 69px; margin-right: 31px; }
    .w-min { width: 8px; height: 2px; background: #fff; margin-top: 7px; margin-right: 21px; }
    .w-max { width: 11px; height: 11px; border: 1px solid #fff; margin-right: 18px; }
    .tabsrow { height: 33px; display: flex; align-items: stretch; }
    .tab { padding: 2px 16px 0; font-size: 16px; line-height: 30px; flex: none; }
    .tab.file { padding: 2px 0 0; margin: 0 25px 0 19px; width: 51px; }
    .tab.on { color: #f8c34c; box-shadow: inset 0 -3px 0 #f3b431; padding: 2px 15.5px 0 16.5px; }
    .tab.pmi { padding-right: 19px; }
    .tabs-right { margin-left: auto; display: flex; align-items: center; padding: 2px 6px 0 0; }
    .search { width: 155px; height: 25px; background: #fff; border: 1px solid #8aa; color: #222; display: flex; align-items: center; justify-content: space-between; padding: 0 2px 0 1px; margin-right: 11px; font-size: 14px; }
    .fs { width: 16px; height: 15px; margin-right: 10px; background:
      linear-gradient(#fff,#fff) 0 0/4px 1px no-repeat, linear-gradient(#fff,#fff) 0 0/1px 4px no-repeat,
      linear-gradient(#fff,#fff) 100% 0/4px 1px no-repeat, linear-gradient(#fff,#fff) 100% 0/1px 4px no-repeat,
      linear-gradient(#fff,#fff) 0 100%/4px 1px no-repeat, linear-gradient(#fff,#fff) 0 100%/1px 4px no-repeat,
      linear-gradient(#fff,#fff) 100% 100%/4px 1px no-repeat, linear-gradient(#fff,#fff) 100% 100%/1px 4px no-repeat; }
    .help { width: 15px; height: 15px; border: 1.5px solid #fff; border-radius: 50%; margin-left: 10px; font: 11px/13px "Liberation Sans", sans-serif; text-align: center; }
    .dot { width: 14px; height: 14px; border-radius: 50%; background: #8a8a8a; margin-left: 12px; }

    .ribbon { height: 108px; flex: none; display: flex; padding-top: 5px; border-bottom: 1px solid #ddd; position: relative; }
    .group { height: 98px; flex: none; border-right: 1px solid #ddd; display: flex; flex-direction: column; }
    .gbody { height: 82px; display: flex; align-items: flex-start; }
    .gfoot { height: 16px; display: flex; }
    .glabel { flex: 1; min-width: 0; text-align: center; color: #117fa3; font-size: 14px; line-height: 20px; white-space: nowrap; }
    .glabel.tight { text-align: left; letter-spacing: -1px; padding-left: 2px; }
    .gdrop { width: 22px; flex: none; display: flex; justify-content: flex-end; padding: 5px 10px 0 0; }
    .big { flex: none; display: flex; flex-direction: column; align-items: center; }
    .big-ico { height: 38px; display: flex; align-items: center; justify-content: center; margin-bottom: 0; }
    .big-lbl { line-height: 20px; white-space: nowrap; }
    .big .tri { margin-top: 5px; }
    .scol { flex: none; padding-top: 1px; }
    .small { height: 38px; display: flex; align-items: center; gap: 3px; white-space: nowrap; }
    .icols { display: flex; flex-direction: column; padding-top: 1px; }
    .irow { height: 31px; display: flex; align-items: center; }
    .cell { width: 23px; flex: none; display: flex; justify-content: center; }
    .isep { width: 1px; height: 22px; margin: 0 2px; background: #ccc; flex: none; }
    .ribbon-end { position: absolute; right: 6px; top: 90px; }

    .toolbar { height: 32px; flex: none; display: flex; align-items: center; border-bottom: 1px solid #aaa; }
    .vsep { width: 1px; height: 24px; background: #ddd; flex: none; }
    .menu-lines { width: 11px; height: 9px; border-top: 1px solid #333; border-bottom: 1px solid #333; position: relative; flex: none; }
    .menu-lines::after { content: ""; position: absolute; left: 0; right: 0; top: 3px; height: 1px; background: #333; }
    .menu-lbl { width: 51px; white-space: nowrap; }
    .menu-lbl u { text-underline-offset: 2px; }
    .dd { height: 26px; border: 1px solid #777; display: flex; align-items: center; justify-content: space-between; padding: 0 6px 0 2px; flex: none; }
    .act { width: 22px; height: 22px; background: #c4e1ea; display: flex; align-items: center; justify-content: center; flex: none; }

    .main { flex: 1; min-height: 0; display: flex; border-bottom: 1px solid #aaa; position: relative; }
    .rail { width: 31px; flex: none; background: #dcdcdc; border-right: 1px solid #aaa; display: flex; flex-direction: column; align-items: flex-start; }
    .rail-i { width: 28px; height: 28px; margin-left: 2px; display: flex; align-items: center; justify-content: center; flex: none; }
    .rail-i.on { width: 29px; height: 45px; margin-right: -1px; background: #fff; border: 1px solid #aaa; border-right: 0; position: relative; }

    .panel { width: 767px; flex: none; padding: 0 10px 6px 6px; border-right: 1px solid #aaa; }
    .panel-in { height: 100%; border: 1px solid #ddd; border-top: 0; display: flex; flex-direction: column; }
    .nav-head { height: 31px; flex: none; display: flex; align-items: center; justify-content: space-between; padding: 0 5px 0 3px; font-size: 15px; }
    .max-btn { width: 13px; height: 12px; border: 1px solid #222; border-top-width: 2px; }
    .tree { height: 150px; flex: none; overflow: hidden; border-top: 1px solid #ddd; padding-top: 1px; position: relative; }
    .tr { display: grid; grid-template-columns: 252px 29px 30px 125px 1fr; height: 24px; border-bottom: 1px solid #e8e8e8; position: relative; font-size: 15px; line-height: 23px; }
    .tr > div { border-right: 1px solid #e8e8e8; display: flex; align-items: center; justify-content: center; padding-right: 4px; min-width: 0; white-space: nowrap; }
    .tr > div:last-child { border-right: 0; }
    .tr > .name { justify-content: flex-start; padding-right: 0; }
    .tr.alt { background: #f9f9f9; }
    .th { background: #efefef; border-bottom: 1px solid #ccc; }
    .th > div { border-right: 1px solid #d8d8d8; justify-content: flex-start; padding-left: 6px; }
    .up { width: 0; height: 0; border: 5.5px solid transparent; border-bottom: 6px solid #222; border-top: 0; margin-left: 18px; }
    .name .plus { width: 10px; height: 10px; border: 1px solid #ccc; background: #fff; margin-left: 6px; margin-right: 4px; position: relative; flex: none; }
    .plus::before { content: ""; position: absolute; left: 1px; right: 1px; top: 3px; height: 1px; background: #222; }
    .plus.p::after { content: ""; position: absolute; top: 1px; bottom: 1px; left: 3px; width: 1px; background: #222; }
    .name .g { display: flex; align-items: center; gap: 2px; }
    .conn { position: absolute; border-left: 1px dotted #888; z-index: 1; }
    .conn.b { border-bottom: 1px dotted #888; }
    .split { height: 6px; flex: none; background: #d6d6d6; border-top: 1px solid #aaa; border-bottom: 1px solid #bbb; }

    .sec { display: flex; align-items: center; gap: 9px; padding-left: 7px; color: #117fa3; font-size: 18px; flex: none; }
    .sec::before { content: ""; width: 0; height: 0; border: 5.5px solid transparent; border-top: 7px solid #0c6f91; border-bottom: 0; }
    .rel { display: flex; gap: 2px; padding-left: 7px; flex: none; }
    .lst { width: 701px; height: 191px; border: 1px solid #ddd; padding-top: 1px; overflow: hidden; flex: none; }
    .lr { height: 24px; border-bottom: 1px solid #e8e8e8; }
    .lr:nth-child(even) { background: #f9f9f9; }
    .side { display: flex; flex-direction: column; gap: 2px; }
    .sb { width: 32px; height: 32px; border: 1px solid #ccc; display: flex; align-items: center; justify-content: center; }
    .sb.on { border: 1px solid #777; }
    .hr { height: 2px; background: #d8d8d8; flex: none; }
    .det { margin-left: 8px; width: 735px; height: 193px; border: 1px solid #ddd; overflow: hidden; flex: none; }
    .dr { display: grid; grid-template-columns: 80px 50px 110px 1fr; height: 24px; border-bottom: 1px solid #e8e8e8; font-size: 15px; line-height: 23px; }
    .dr > div { border-right: 1px solid #e8e8e8; }
    .dr:nth-child(odd) { background: #f9f9f9; }
    .dr.th { background: #efefef; border-bottom: 1px solid #ccc; height: 25px; }
    .dr.th > div { display: flex; align-items: center; padding-left: 6px; border-right: 1px solid #d8d8d8; }
    .dr > div:last-child { border-right: 0; }
    .prev-wrap { display: flex; justify-content: center; flex: none; }
    .prev { width: 309px; height: 231px; border: 1px solid #ddd; display: flex; align-items: center; justify-content: center; font-size: 15px; padding-bottom: 3px; }

    .view { flex: 1; min-width: 0; display: flex; flex-direction: column; position: relative; }
    .vtabs { height: 30px; flex: none; display: flex; align-items: stretch; border-bottom: 2px solid #00648c; font-size: 15px; }
    .vt { display: flex; align-items: center; white-space: nowrap; }
    .vt.home { padding-left: 6px; width: 108px; gap: 4px; }
    .vt.cur { width: 152px; padding-left: 7px; background: #00648c; color: #fff; font-size: 16px; }
    .canvas { flex: 1; position: relative; }
    .canvas svg { position: absolute; inset: 0; }
    .canvas text { font-family: "Liberation Sans", sans-serif; }

    .status { height: 23px; flex: none; padding-left: 2px; font-size: 14px; -webkit-text-stroke: 0.3px #222; line-height: 22px; white-space: nowrap; word-spacing: 2px; }
    .bottom { height: 8px; flex: none; background: #00648c; border-top: 1px solid #aaa; }
    .mark { position: absolute; left: 1660px; top: 1060px; pointer-events: none; }
  `;

  private renderHeader() {
    const q = (name: string, ml: number) => html`<span style="margin-left:${ml}px">${ic(name, 18)}</span>`;
    const qs = (ml: number) => html`<i class="qsep" style="margin-left:${ml}px"></i>`;
    const qt = (ml: number) => html`<span class="qtri" style="margin-left:${ml}px">${down()}</span>`;
    return html`
      <header class="header">
        <div class="titlebar">
          <div class="brand">NX</div>
          ${qs(5)}${q('save', 7)}${qs(6)}${q('undo', 4)}${qt(9)}${q('redo', 9)}${qs(5)}
          ${q('fan', 5)}${q('copyDim', 4)}${q('pasteDim', 6)}${q('hexDim', 5)}${qs(5)}
          ${q('qCube', 5)}${qt(8)}${qs(9)}${q('qTool', 5)}${qs(5)}${q('qWins', 5)}${q('qWin', 4)}
          <span class="qtext">窗口</span>${qt(5)}<span class="qtri lined" style="margin-left:10px">${down()}</span>
          <span class="wintitle">NX - 建模</span>
          <div class="winright">
            <span class="siemens">SIEMENS</span>
            <i class="w-min"></i><i class="w-max"></i>
            <svg class="ic" viewBox="0 0 12 12" width="12" height="12"><path d="M1 1 11 11M11 1 1 11" stroke="#fff" stroke-width="1.5"/></svg>
          </div>
        </div>
        <div class="tabsrow">
          <div class="tab file">文件(F)</div>
          <div class="tab on">主页</div>
          ${TABS.map((t) => html`<div class="tab ${t === 'PMI' ? 'pmi' : ''}">${t}</div>`)}
          <div class="tabs-right">
            <div class="search"><span>可视化</span>${ic('magSmall', 17)}</div>
            <i class="fs"></i>
            <svg class="ic" viewBox="0 0 16 10" width="16" height="10"><path d="M1 9 8 2 15 9" fill="none" stroke="#fff" stroke-width="1.4"/></svg>
            <div class="help">?</div>
            <i class="dot"></i>
          </div>
        </div>
      </header>`;
  }

  private renderRibbon() {
    return html`
      <div class="ribbon">
        ${group('构造', 121, 10, html`${big('datum', '基准平面', 60, true)}${big('sketch', '草图', 44)}`)}
        ${group('基本', 572, 7, html`
          ${big('extrude', '拉伸', 40)}${big('revolve', '旋转', 40)}${big('hole', '孔', 42)}${big('unite', '合并', 40)}${big('subtract', '减去', 40)}
          ${big('trim', '修剪体', 54, true)}${big('blend', '边倒圆', 49, true)}${big('chamfer', '倒斜角', 50)}
          <div class="scol" style="width:65px;margin-left:6px">${small('draft', '拔模')}${small('shell', '抽壳')}</div>
          <div class="scol" style="width:91px">${small('pattern', '阵列特征')}${small('mirror', '镜像特征')}</div>
          ${big('more1', '更多', 48, true)}`)}
        ${group('同步建模', 302, 7, html`
          ${big('move', '移动', 40)}${big('del', '删除', 40)}${big('swap', '替换', 41)}
          <div class="scol" style="width:119px;margin-left:6px">${small('offset', '偏置')}${small('resize', '调整圆角大小')}</div>
          ${big('sync', '更多', 48, true)}`)}
        ${group('标准化工具...', 104, 4, html`<div class="icols">
          ${iconRow(['sheet', 'layers', 'gearCube', '|', 'tag'])}${iconRow(['checkGray', 'tool', 'cubeCheck', '|', 'docArrow'])}</div>`)}
        ${group('齿...', 52, 1, html`<div class="icols">${iconRow(['at', 'pipe'])}${iconRow(['hand'])}</div>`)}
        ${group('弹...', 58, 3, html`<div class="icols">${iconRow(['coil', 'spring'])}${iconRow(['bearing', '|', 'scissors'])}</div>`)}
        ${group('加...', 51, 2, html`<div class="icols">${iconRow(['blueCheck', 'blueList'])}${iconRow(['gridBlue', 'csys'])}</div>`)}
        ${group('建模工具 ...', 98, 4, html`<div class="icols">
          ${iconRow(['triangle', 'tableRed', 'folderCross', 'folderCircles'])}${iconRow(['docLines', 'brushDim', '|', 'bino'])}</div>`)}
        ${group('..', 29, 2, html`<div class="icols">${iconRow(['gold'])}${iconRow(['gold'])}</div>`, true)}
        ${group('尺寸快速格式化工具 - GC工具箱', 288, 4, html`<div class="icols">
          ${iconRow(['dimRed', '|', 'xMark', 'd1', 'd2', 'd3', 'd4', 'boxX', 'parenX', 'h7', 'h8', 'h9', 'h10'])}
          ${iconRow(['radLead', 'radDiag', '|', 'dia1', 'dia2', 'rotateBack'])}</div>`)}
        <span class="ribbon-end">${down()}</span>
      </div>`;
  }

  private renderToolbar() {
    const t = (name: string, ml: number, dim = 16) => html`<span style="margin-left:${ml}px">${ic(name, dim)}</span>`;
    const a = (ml: number) => html`<span style="margin-left:${ml}px">${down()}</span>`;
    return html`
      <div class="toolbar">
        <i class="menu-lines" style="margin-left:11px"></i>
        <span class="menu-lbl" style="margin-left:7px">菜单(<u>M</u>)</span>${a(6)}
        <i class="vsep" style="margin-left:10px"></i>
        <div class="dd" style="width:183px;margin-left:11px"><span>无选择过滤器</span>${down()}</div>
        ${t('funnel', 10)}
        <div class="dd" style="width:191px;margin-left:7px"><span>整个装配</span>${down()}</div>
        <div class="act" style="margin-left:8px">${ic('tbCube', 17)}</div>
        ${t('tbChain', 4)}${t('tbFilter', 12)}${a(4)}${t('tbBrack', 10)}${t('tbOcross', 10)}${t('tbSquare', 9)}${a(7)}
        ${t('tbCut', 14)}${t('tbCut2', 8)}
        <i class="vsep" style="margin-left:12px"></i>
        <span style="margin-left:auto;margin-right:6px">${down()}</span>
      </div>`;
  }

  private renderTree() {
    const row = (cls: string, name: unknown, cur: unknown = nothing, latest = false) => html`
      <div class="tr ${cls}">
        <div class="name">${name}</div>
        <div>${cur}</div>
        <div>${latest ? ic('check', 16) : nothing}</div>
        <div></div><div></div>
      </div>`;
    return html`
      <div class="tree">
        <i class="conn" style="left:11px;top:43px;height:38px"></i>
        <i class="conn b" style="left:29px;top:98px;height:13px;width:10px"></i>
        <i class="conn b" style="left:29px;top:98px;height:37px;width:10px"></i>
        <div class="tr th">
          <div>名称<i class="up"></i></div><div>当.</div><div>最.</div><div>附注</div><div></div>
        </div>
        ${row('', html`<i class="plus p"></i><span class="g">${ic('viewWin', 15)}</span><span style="margin-left:3px">模型视图</span>`)}
        ${row('alt', html`<i class="plus p"></i><span class="g">${ic('check', 15)}${ic('cam', 14)}</span><span style="margin-left:4px">摄像机</span>`)}
        ${row('', html`<i class="plus"></i><span class="g">${ic('ball', 15)}${ic('hist', 14)}</span><span style="margin-left:4px">模型历史记录</span>`, nothing, true)}
        ${row('alt', html`<span class="g" style="margin-left:39px">${ic('eye', 15)}${ic('csys', 14)}</span><span style="margin-left:4px">基准坐标系 (0)</span>`, nothing, true)}
        ${row('', html`<span class="g" style="margin-left:39px">${ic('eye', 15)}${ic('blockIco', 14)}</span><b style="margin-left:4px">块 (1)</b>`, ic('treeDot', 14), true)}
        <div class="tr"></div>
      </div>`;
  }

  private renderPanel() {
    const filler = Array.from({ length: 8 });
    const rows = Array.from({ length: 7 });
    return html`
      <div class="panel">
        <div class="panel-in">
          <div class="nav-head"><span>部件导航器</span><i class="max-btn"></i></div>
          ${this.renderTree()}
          <div class="split"></div>
          <div class="sec" style="height:28px">相关性</div>
          <div class="rel" style="margin-top:4px">
            <div class="lst">${filler.map(() => html`<div class="lr"></div>`)}</div>
            <div class="side">
              <div class="sb on">${ic('mag', 25)}</div>
              <div class="sb">${ic('arrR', 24)}</div>
              <div class="sb">${ic('arrL', 24)}</div>
              <div class="sb">${ic('zoomBox', 26)}</div>
            </div>
          </div>
          <div class="hr" style="margin-top:8px"></div>
          <div class="sec" style="height:26px">细节</div>
          <div class="det" style="margin-top:6px">
            <div class="dr th"><div>参数</div><div>值</div><div>表达式<i class="up"></i></div><div></div></div>
            ${rows.map(() => html`<div class="dr"><div></div><div></div><div></div><div></div></div>`)}
          </div>
          <div class="hr" style="margin-top:8px"></div>
          <div class="sec" style="height:26px">预览</div>
          <div class="prev-wrap" style="margin-top:6px"><div class="prev">没有可用的预览</div></div>
        </div>
      </div>`;
  }

  private renderViewport() {
    return html`
      <div class="view">
        <div class="vtabs">
          <div class="vt home">${ic('home', 18)}<span>欢迎页面</span></div>
          <div class="vt cur">${ic('part', 15)}<span style="margin-left:5px">_model1.prt</span>
            <span style="margin-left:6px">${ic('docSmall', 11)}</span><span style="margin-left:6px">${ic('close', 9)}</span></div>
        </div>
        <div class="canvas">
          <svg width="1172" height="918" viewBox="798 235 1172 918">
            <path d="M1407 463 1543 526 1375 577 1238 514Z" fill="#a3afb2"/>
            <path d="M1238 514 1375 577V778L1238 715Z" fill="#6e7677"/>
            <path d="M1375 577 1543 526V727L1375 778Z" fill="#929d9e"/>
            <path d="M1407 463 1543 526V727L1375 778 1238 715V514ZM1238 514 1375 577 1543 526M1375 577V778" fill="none" stroke="#3c4343" stroke-width="1"/>
            <g fill="none" stroke="#c6cccc" stroke-width="1">
              <path d="M1238 653 1290 637V699M1238 715 1328 687"/>
              <path d="M1290 699 1333 719 1281 735"/>
            </g>
            <path d="M1343 683 1329 684 1331 690Z" fill="#eee" stroke="#ddd"/>
            <g fill="none" stroke="#0000ff" stroke-width="1.3">
              <path d="M1238.5 715V600M1238 653 1281 672V735M1238 715 1315 751M1231 715H1246M1238.5 708V722"/>
            </g>
            <path d="M1238.5 597 1243 607H1234Z" fill="#0000ff"/>
            <path d="M1322 752 1311 747 1310 753Z" fill="#0000ff" stroke="#0000ff" stroke-width="1.5"/>
            <text x="1238" y="591" text-anchor="middle" font-size="13" fill="#5a68e6">Z</text>
            <text x="1342" y="688" font-size="14" fill="#ccd">Y</text>
            <text x="1323" y="761" font-size="13" fill="#5a68e6">X</text>

            <path d="M876 1020 907 1011 935 1023 902 1033ZM876 1020V1060L902 1072M902 1033V1072L935 1060V1023" fill="none" stroke="#b5b5b5" stroke-width="1"/>
            <path d="M902 1033V1072" stroke="#d0d0d0" stroke-width="2"/>
            <path d="M905 1021V992" stroke="#0a3fc0" stroke-width="5" stroke-linecap="round"/>
            <path d="M905 973 911 993H899Z" fill="#0a3fc0"/>
            <text x="905" y="970" text-anchor="middle" font-size="12" fill="#3a5ae8">Z</text>
            <path d="M935 1033 952 1028 951 1025 962 1024 952 1032 935 1036Z" fill="#3c9a3e" stroke="#2f8a32"/>
            <text x="966" y="1026" font-size="12" fill="#3c9a3e">Y</text>
            <path d="M918 1047 938 1056" stroke="#c62828" stroke-width="5" stroke-linecap="round"/>
            <path d="M951 1063 935 1052 932 1062Z" fill="#c62828"/>
            <text x="953" y="1070" font-size="12" fill="#d83a3a">X</text>
          </svg>
        </div>
      </div>`;
  }

  render() {
    return html`
      <div class="shell">
        ${this.renderHeader()}
        ${this.renderRibbon()}
        ${this.renderToolbar()}
        <div class="main">
          <aside class="rail">
            ${RAIL.map(([n, m, s, on]) => html`<div class="rail-i ${on ? 'on' : ''}" style="margin-top:${m}px">${ic(n, s)}</div>`)}
          </aside>
          ${this.renderPanel()}
          ${this.renderViewport()}
        </div>
        <div class="status">选择对象并使用 MB3，或者双击某一对象</div>
        <div class="bottom"></div>
      </div>
      <svg class="mark" width="310" height="124" viewBox="0 0 930 372">
        <path d="M330 280H850" stroke="#fff" stroke-width="3" stroke-dasharray="10 6 4 7 14 5"/>
        <g opacity=".92">
          <path d="M125 125 188 87 232 112Q250 140 246 170L190 140Q160 122 125 125Z" fill="#d6f0fe"/>
          <path d="M236 112 296 150V190Q280 230 250 240V172Q252 140 236 112Z" fill="#9bdcfb"/>
          <path d="M296 195V272L262 292Q225 292 194 276L250 245Q280 230 296 195Z" fill="#7fcef5"/>
          <path d="M258 294 188 332 132 300V248L190 282Q222 296 258 294Z" fill="#81d5fc"/>
          <path d="M128 298 82 272V212Q92 190 128 182V245Q124 270 128 298Z" fill="#a5defa"/>
          <path d="M82 207V150L122 127Q160 122 186 138L128 176Q96 186 82 207Z" fill="#c2e9fd"/>
          <path d="M190 155 238 183 190 210 143 183Z" fill="#c6eafe"/>
          <path d="M143 187 188 212V264L143 238Z" fill="#a9dcfa"/>
          <path d="M192 212 238 187V238L192 264Z" fill="#82cdf4"/>
        </g>
      </svg>`;
  }
}
